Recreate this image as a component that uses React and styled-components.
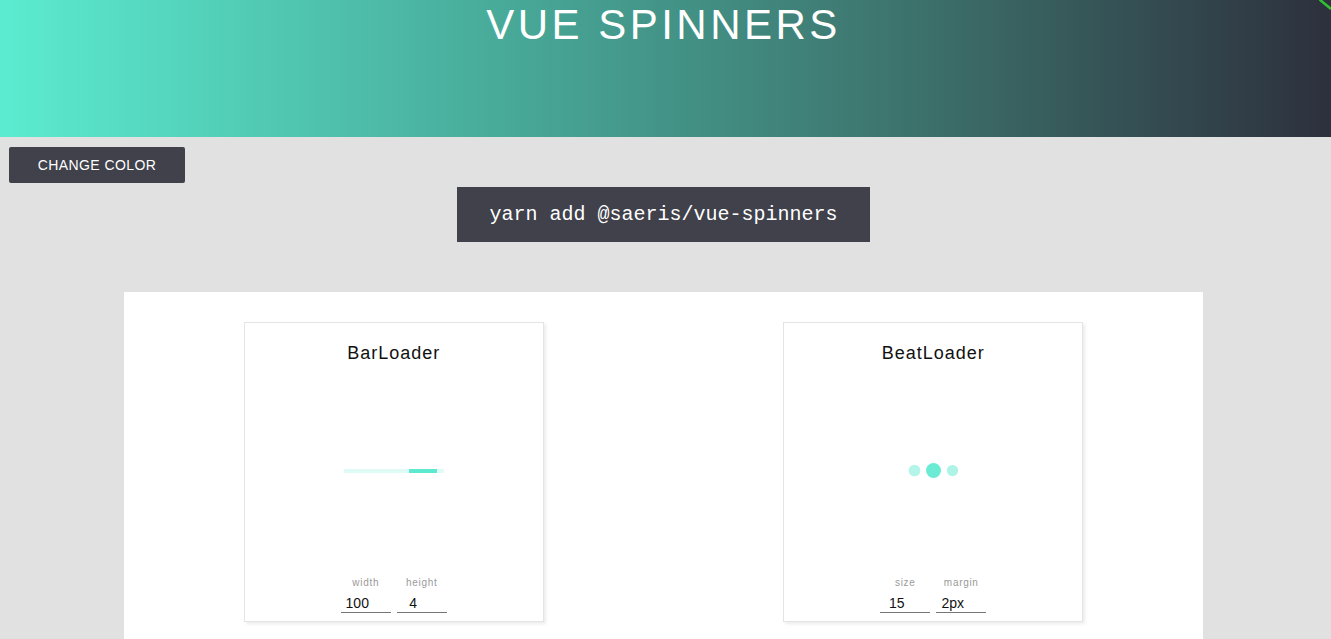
import React from "react";
import styled, { createGlobalStyle } from "styled-components";

const Global = createGlobalStyle`
  html, body { margin: 0; padding: 0; overflow: hidden; }
  body {
    background: #e1e1e1;
    font-family: "Liberation Sans", Arial, sans-serif;
  }
`;

const Header = styled.header`
  position: relative;
  height: 137px;
  background: linear-gradient(to right, #5becd0 0%, #47a696 40%, #3c6f6a 70%, #2d303d 100%);
  display: flex;
  justify-content: center;
  padding-top: 4px;
  box-sizing: border-box;
`;

const Title = styled.h1`
  margin: 0;
  padding-right: 4px;
  font-family: "Liberation Sans", Arial, sans-serif;
  font-weight: 400;
  font-size: 42px;
  line-height: 1;
  letter-spacing: 3.5px;
  color: #ffffff;
`;

const Corner = styled.svg`
  position: absolute;
  top: 0;
  right: 0;
`;

const Main = styled.main`
  padding-right: 4px;
`;

const Toolbar = styled.div`
  padding: 10px 0 0 9px;
`;

const Button = styled.button`
  width: 176px;
  height: 36px;
  border: none;
  border-radius: 2px;
  background: #40414b;
  color: #ffffff;
  font-family: "Liberation Sans", Arial, sans-serif;
  font-size: 14px;
  letter-spacing: 0.4px;
  text-transform: uppercase;
  cursor: pointer;
`;

const CodeRow = styled.div`
  display: flex;
  justify-content: center;
  margin-top: 4px;
`;

const Code = styled.code`
  display: block;
  background: #40414b;
  color: #ffffff;
  font-family: "Liberation Mono", "Courier New", monospace;
  font-size: 20px;
  line-height: 23px;
  padding: 16px 32.5px;
`;

const Panel = styled.section`
  margin: 50px 124px 0;
  background: #ffffff;
  padding: 30px 0;
  display: grid;
  grid-template-columns: 1fr 1fr;
  justify-items: center;
`;

const Card = styled.div`
  width: 300px;
  height: 300px;
  box-sizing: border-box;
  border: 1px solid #e4e4e4;
  box-shadow: 2px 2px 3px rgba(0, 0, 0, 0.08);
  display: flex;
  flex-direction: column;
  align-items: center;
  padding: 20px 0 8px;
`;

const CardTitle = styled.h3`
  margin: 0;
  font-family: "Liberation Sans", Arial, sans-serif;
  font-weight: 400;
  font-size: 18px;
  line-height: 20px;
  letter-spacing: 1px;
  color: #111;
`;

const Stage = styled.div`
  flex: 1;
  display: flex;
  align-items: center;
  justify-content: center;
  width: 100%;
`;

const BarTrack = styled.div`
  position: relative;
  width: 100px;
  height: 4px;
  margin-top: 2px;
  background: rgba(92, 233, 207, 0.2);
  overflow: hidden;
`;

const BarFill = styled.div`
  position: absolute;
  top: 0;
  height: 100%;
  background: #5ce9cf;
`;

const Dot = styled.div`
  width: 15px;
  height: 15px;
  margin: 2px;
  border-radius: 50%;
  background: #5ce9cf;
  transform: scale(${(p) => p.$scale});
  opacity: ${(p) => p.$opacity};
`;

const Controls = styled.div`
  display: flex;
  gap: 6px;
`;

const Field = styled.label`
  display: flex;
  flex-direction: column;
  align-items: center;
`;

const FieldLabel = styled.span`
  font-family: "Liberation Sans", Arial, sans-serif;
  font-size: 10px;
  line-height: 12px;
  letter-spacing: 0.7px;
  color: #9a9a9a;
`;

const Input = styled.input`
  width: 50px;
  height: 24px;
  box-sizing: border-box;
  border: none;
  border-bottom: 1px solid #777;
  outline: none;
  background: transparent;
  padding: 4px 17px 0 0;
  text-align: center;
  font-family: "Liberation Sans", Arial, sans-serif;
  font-size: 14px;
  color: #111;
`;

const Loader = ({ name, children, fields }) => (
  <Card>
    <CardTitle>{name}</CardTitle>
    <Stage>{children}</Stage>
    <Controls>
      {fields.map(([label, value]) => (
        <Field key={label}>
          <FieldLabel>{label}</FieldLabel>
          <Input defaultValue={value} />
        </Field>
      ))}
    </Controls>
  </Card>
);

export default function App() {
  return (
    <>
      <Global />
      <Header>
        <Title>VUE SPINNERS</Title>
        <Corner width="12" height="10" viewBox="0 0 12 10">
          <line x1="0" y1="-1" x2="12" y2="9" stroke="#2fbf2f" strokeWidth="2.5" />
        </Corner>
      </Header>
      <Main>
        <Toolbar>
          <Button>Change Color</Button>
        </Toolbar>
        <CodeRow>
          <Code>yarn add @saeris/vue-spinners</Code>
        </CodeRow>
        <Panel>
          <Loader name="BarLoader" fields={[["width", "100"], ["height", "4"]]}>
            <BarTrack>
              <BarFill style={{ left: "65px", width: "28px" }} />
            </BarTrack>
          </Loader>
          <Loader name="BeatLoader" fields={[["size", "15"], ["margin", "2px"]]}>
            <Dot $scale={0.78} $opacity={0.45} />
            <Dot $scale={1} $opacity={0.9} />
            <Dot $scale={0.75} $opacity={0.5} />
          </Loader>
        </Panel>
      </Main>
    </>
  );
}
